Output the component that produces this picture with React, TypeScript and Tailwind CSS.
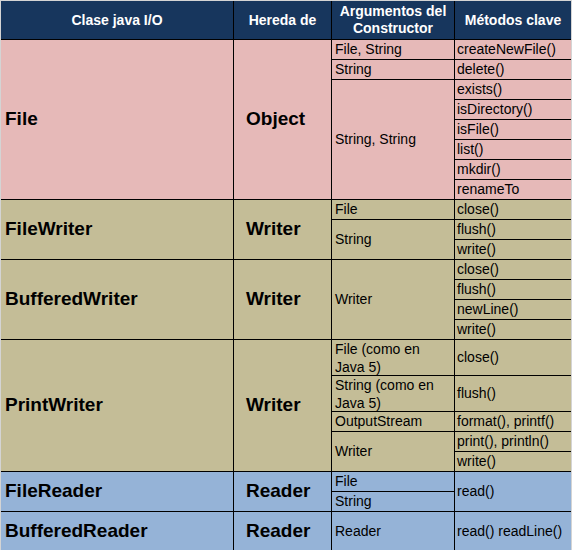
import React from "react";

const font = { fontFamily: '"Liberation Sans", Arial, sans-serif' };

type CellProps = {
  className: string;
  children?: React.ReactNode;
};

// base cell: vertically centred text, colour comes from className
const Cell: React.FC<CellProps> = ({ className, children }) => (
  <div className={`flex items-center text-black ${className}`}>{children}</div>
);

const Head: React.FC<CellProps> = ({ className, children }) => (
  <div
    className={`flex items-center justify-center text-center bg-[#17365d] text-white font-bold text-[14px] leading-[17px] ${className}`}
  >
    {children}
  </div>
);

const App: React.FC = () => {
  return (
    <div className="w-[572px] h-[550px] overflow-hidden bg-[#d4d4d4] pt-px pl-px" style={font}>
      <div className="grid w-[570px] gap-px bg-black grid-cols-[232px_97px_122px_116px] grid-rows-[38px_repeat(15,19px)_35px_35px_repeat(5,19px)_39px]">
        {/* header */}
        <Head className="col-start-1 row-start-1">Clase java I/O</Head>
        <Head className="col-start-2 row-start-1">Hereda de</Head>
        <Head className="col-start-3 row-start-1">
          Argumentos del
          <br />
          Constructor
        </Head>
        <Head className="col-start-4 row-start-1">Métodos clave</Head>

        {/* File */}
        <Cell className="bg-[#e6b9b8] col-start-1 row-start-2 row-span-8 pl-1 font-bold text-[19px]">File</Cell>
        <Cell className="bg-[#e6b9b8] col-start-2 row-start-2 row-span-8 pl-[12px] font-bold text-[19px]">Object</Cell>
        <Cell className="bg-[#e6b9b8] col-start-3 row-start-2 pl-[3px] text-[14px]">File, String</Cell>
        <Cell className="bg-[#e6b9b8] col-start-3 row-start-3 pl-[3px] text-[14px]">String</Cell>
        <Cell className="bg-[#e6b9b8] col-start-3 row-start-4 row-span-6 pl-[3px] text-[14px]">String, String</Cell>
        <Cell className="bg-[#e6b9b8] col-start-4 row-start-2 pl-[2px] text-[14px]">createNewFile()</Cell>
        <Cell className="bg-[#e6b9b8] col-start-4 row-start-3 pl-[2px] text-[14px]">delete()</Cell>
        <Cell className="bg-[#e6b9b8] col-start-4 row-start-4 pl-[2px] text-[14px]">exists()</Cell>
        <Cell className="bg-[#e6b9b8] col-start-4 row-start-5 pl-[2px] text-[14px]">isDirectory()</Cell>
        <Cell className="bg-[#e6b9b8] col-start-4 row-start-6 pl-[2px] text-[14px]">isFile()</Cell>
        <Cell className="bg-[#e6b9b8] col-start-4 row-start-7 pl-[2px] text-[14px]">list()</Cell>
        <Cell className="bg-[#e6b9b8] col-start-4 row-start-8 pl-[2px] text-[14px]">mkdir()</Cell>
        <Cell className="bg-[#e6b9b8] col-start-4 row-start-9 pl-[2px] text-[14px]">renameTo</Cell>

        {/* FileWriter */}
        <Cell className="bg-[#c4bd97] col-start-1 row-start-10 row-span-3 pl-1 font-bold text-[19px]">FileWriter</Cell>
        <Cell className="bg-[#c4bd97] col-start-2 row-start-10 row-span-3 pl-[12px] font-bold text-[19px]">Writer</Cell>
        <Cell className="bg-[#c4bd97] col-start-3 row-start-10 pl-[3px] text-[14px]">File</Cell>
        <Cell className="bg-[#c4bd97] col-start-3 row-start-11 row-span-2 pl-[3px] text-[14px]">String</Cell>
        <Cell className="bg-[#c4bd97] col-start-4 row-start-10 pl-[2px] text-[14px]">close()</Cell>
        <Cell className="bg-[#c4bd97] col-start-4 row-start-11 pl-[2px] text-[14px]">flush()</Cell>
        <Cell className="bg-[#c4bd97] col-start-4 row-start-12 pl-[2px] text-[14px]">write()</Cell>

        {/* BufferedWriter */}
        <Cell className="bg-[#c4bd97] col-start-1 row-start-13 row-span-4 pl-1 font-bold text-[19px]">BufferedWriter</Cell>
        <Cell className="bg-[#c4bd97] col-start-2 row-start-13 row-span-4 pl-[12px] font-bold text-[19px]">Writer</Cell>
        <Cell className="bg-[#c4bd97] col-start-3 row-start-13 row-span-4 pl-[3px] text-[14px]">Writer</Cell>
        <Cell className="bg-[#c4bd97] col-start-4 row-start-13 pl-[2px] text-[14px]">close()</Cell>
        <Cell className="bg-[#c4bd97] col-start-4 row-start-14 pl-[2px] text-[14px]">flush()</Cell>
        <Cell className="bg-[#c4bd97] col-start-4 row-start-15 pl-[2px] text-[14px]">newLine()</Cell>
        <Cell className="bg-[#c4bd97] col-start-4 row-start-16 pl-[2px] text-[14px]">write()</Cell>

        {/* PrintWriter */}
        <Cell className="bg-[#c4bd97] col-start-1 row-start-17 row-span-5 pl-1 font-bold text-[19px]">PrintWriter</Cell>
        <Cell className="bg-[#c4bd97] col-start-2 row-start-17 row-span-5 pl-[12px] font-bold text-[19px]">Writer</Cell>
        <Cell className="bg-[#c4bd97] col-start-3 row-start-17 pl-[3px] text-[14px] leading-[18px]">
          File (como en
          <br />
          Java 5)
        </Cell>
        <Cell className="bg-[#c4bd97] col-start-3 row-start-18 pl-[3px] text-[14px] leading-[18px]">
          String (como en
          <br />
          Java 5)
        </Cell>
        <Cell className="bg-[#c4bd97] col-start-3 row-start-19 pl-[3px] text-[14px]">OutputStream</Cell>
        <Cell className="bg-[#c4bd97] col-start-3 row-start-20 row-span-2 pl-[3px] text-[14px]">Writer</Cell>
        <Cell className="bg-[#c4bd97] col-start-4 row-start-17 pl-[2px] text-[14px]">close()</Cell>
        <Cell className="bg-[#c4bd97] col-start-4 row-start-18 pl-[2px] text-[14px]">flush()</Cell>
        <Cell className="bg-[#c4bd97] col-start-4 row-start-19 pl-[2px] text-[14px]">format(), printf()</Cell>
        <Cell className="bg-[#c4bd97] col-start-4 row-start-20 pl-[2px] text-[14px]">print(), println()</Cell>
        <Cell className="bg-[#c4bd97] col-start-4 row-start-21 pl-[2px] text-[14px]">write()</Cell>

        {/* FileReader */}
        <Cell className="bg-[#95b3d7] col-start-1 row-start-22 row-span-2 pl-1 font-bold text-[19px]">FileReader</Cell>
        <Cell className="bg-[#95b3d7] col-start-2 row-start-22 row-span-2 pl-[12px] font-bold text-[19px]">Reader</Cell>
        <Cell className="bg-[#95b3d7] col-start-3 row-start-22 pl-[3px] text-[14px]">File</Cell>
        <Cell className="bg-[#95b3d7] col-start-3 row-start-23 pl-[3px] text-[14px]">String</Cell>
        <Cell className="bg-[#95b3d7] col-start-4 row-start-22 row-span-2 pl-[2px] text-[14px]">read()</Cell>

        {/* BufferedReader */}
        <Cell className="bg-[#95b3d7] col-start-1 row-start-24 pl-1 font-bold text-[19px]">BufferedReader</Cell>
        <Cell className="bg-[#95b3d7] col-start-2 row-start-24 pl-[12px] font-bold text-[19px]">Reader</Cell>
        <Cell className="bg-[#95b3d7] col-start-3 row-start-24 pl-[3px] text-[14px]">Reader</Cell>
        <Cell className="bg-[#95b3d7] col-start-4 row-start-24 pl-[2px] text-[14px]">read() readLine()</Cell>
      </div>
    </div>
  );
};

export default App;
